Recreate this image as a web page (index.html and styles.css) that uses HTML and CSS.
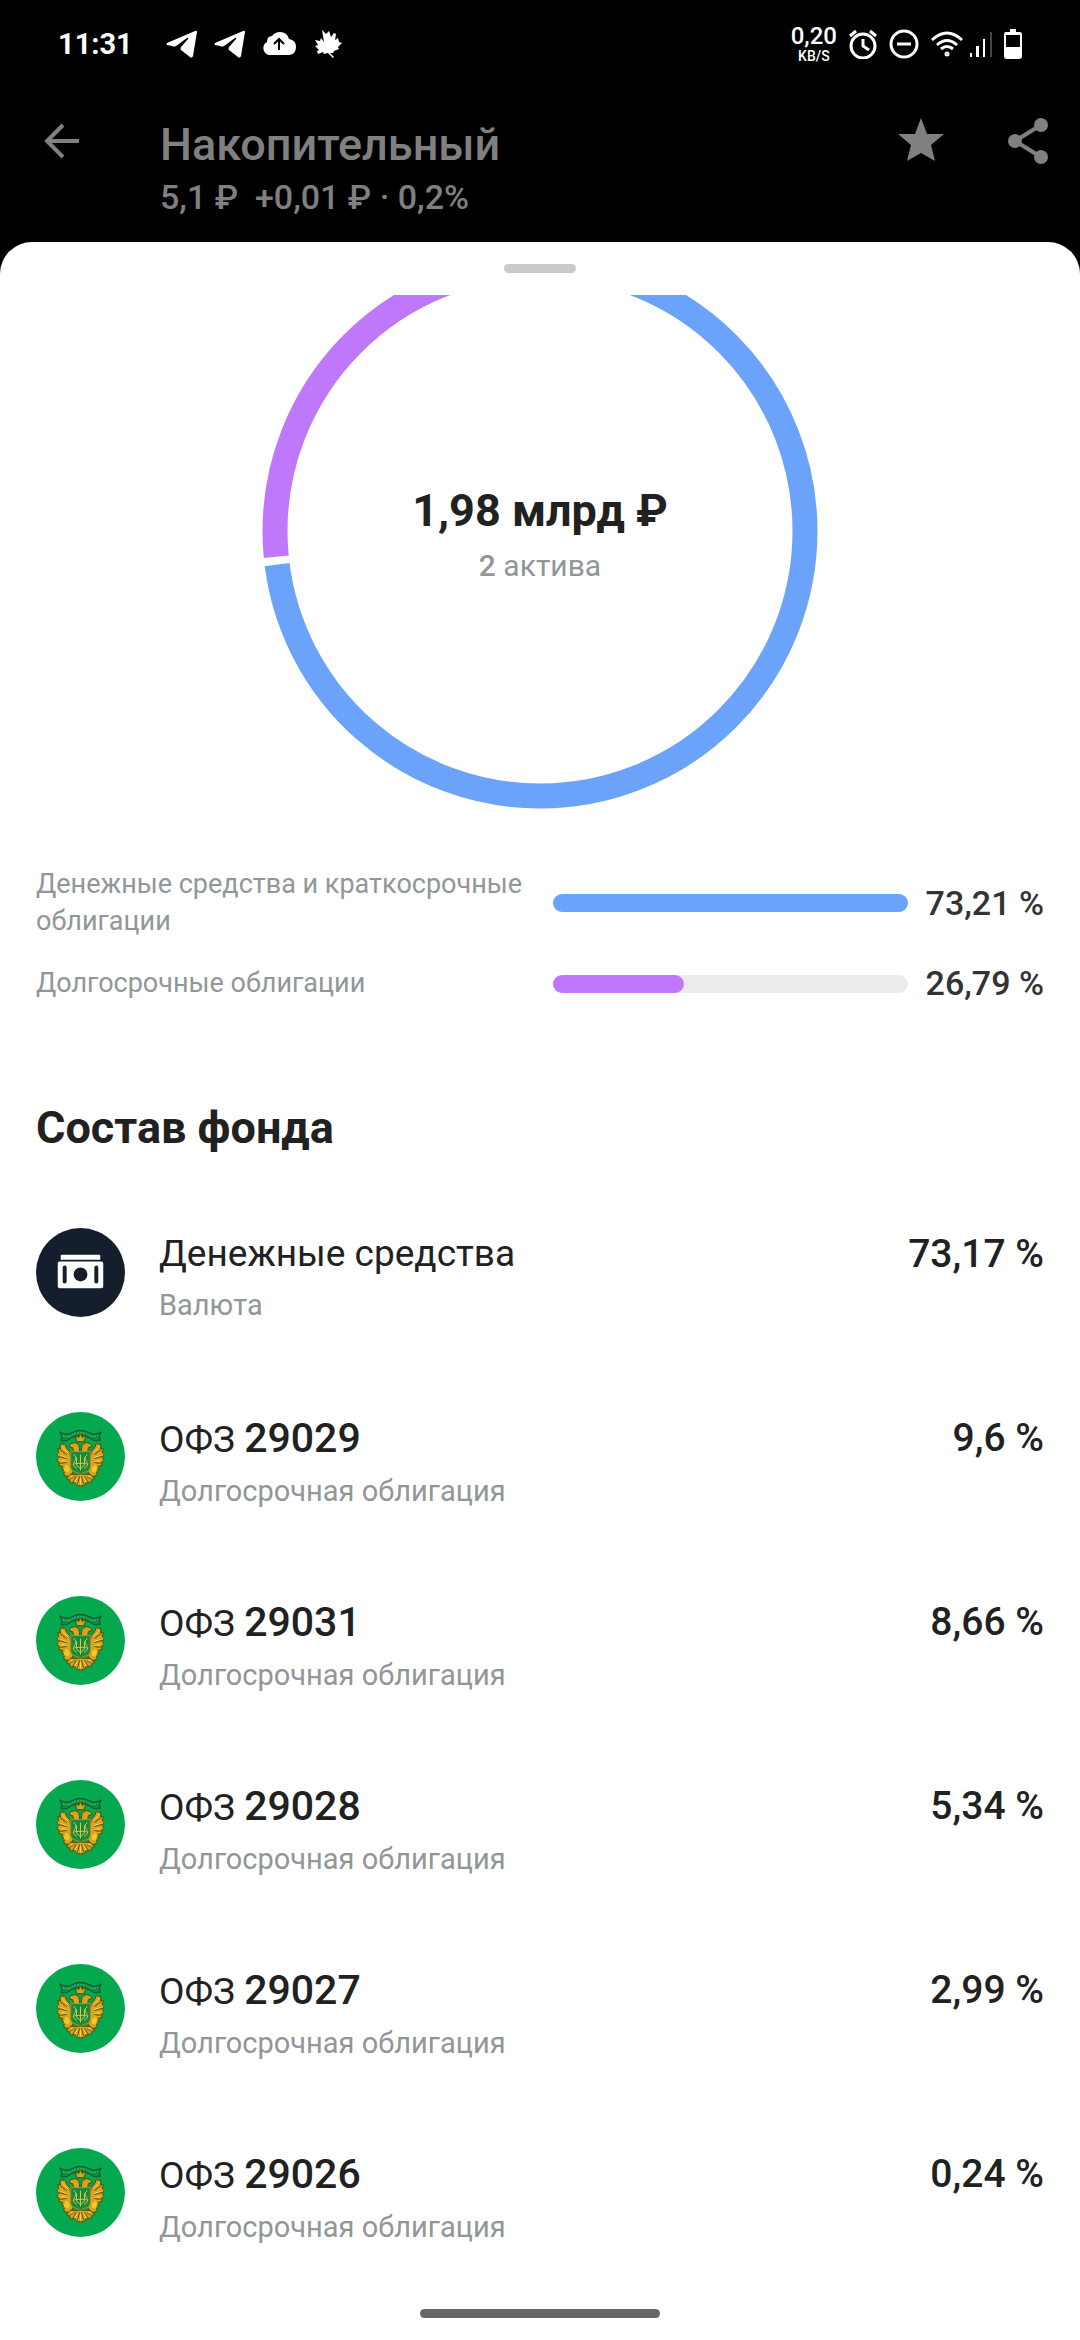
FILE: index.html
```html
<!DOCTYPE html>
<html lang="ru">
<head>
  <meta charset="utf-8">
  <meta name="viewport" content="width=device-width, initial-scale=1">
  <title>Накопительный</title>
  <link rel="stylesheet" href="styles.css">
</head>
<body>
  <!-- shared icons -->
  <svg class="sprite" aria-hidden="true">
    <symbol id="telegram" viewBox="0 0 32 28">
      <path d="M1 13 29 1q2-1 2 1l-4 24q-1 3-3 1l-9-7q-1-1 0-3l7-8q1-2-1-1L10 16q-2 1-4 0l-5-1q-1-1 0-2z"/>
    </symbol>
    <symbol id="eagle" viewBox="0 0 90 90">
      <circle cx="45" cy="45" r="45" fill="#04a84f"/>
      <!-- ribbon -->
      <path d="M24 20q6 4 12 1 9-5 18 0 6 3 12-1l-2 5 1 4q-7 1-11-3-9-4-18 0-4 4-11 3l1-4z" fill="#0b8a42" stroke="#07502c" stroke-width="1"/>
      <path d="M27 24q6 2 10-1 8-4 16 0 4 3 10 1" fill="none" stroke="#4ec878" stroke-width="1" stroke-dasharray="2 1"/>
      <!-- wings, heads, crown and tail -->
      <g fill="#d9a41a" stroke="#4a4a12" stroke-width="1">
        <path d="M34 40q-3-2-5-8l-5 1 1 4-3 0 1 4-2 2 2 3-2 3 3 2-1 3 4 1-1 3 3 1-1 5 7 2 3-7z"/>
        <path d="M56 40q3-2 5-8l5 1-1 4 3 0-1 4 2 2-2 3 2 3-3 2 1 3-4 1 1 3-3 1 1 5-7 2-3-7z"/>
        <path d="M44 40q1-8-5-9-4 0-6 4l4 1 1 5zM46 40q-1-8 5-9 4 0 6 4l-4 1-1 5z"/>
        <path d="m40 23 3 3 2-4 2 4 3-3-1 7h-8z"/>
        <path d="M35 63h20l4 4-3 2-1 3-4-1-2 3-4 1-4-1-2-3-4 1-1-3-3-2z"/>
      </g>
      <path d="m24 38 7 5m-8 2 8 2m-6 5 6-1m35-13-7 5m8 2-8 2m6 5-6-1M34 68l5-3m-2 6 4-6m1 8 2-8m4 8-2-8m7 6-4-6m7 3-5-3" stroke="#54500f" stroke-width="1" fill="none"/>
      <path d="m26 35 6 6m-7 3 6 2m-6 3 6 1m33-15-6 6m7 3-6 2m6 3-6 1M35 66l3-1m1 6 3-5m3 7v-7m6 5-3-5m7 0-3-1" stroke="#ffd84a" stroke-width="1" fill="none"/>
      <!-- shield with monogram -->
      <path d="M35 40h20v15q0 5-6 6l-4 2-4-2q-6-1-6-6z" fill="#168a40" stroke="#b8911b" stroke-width="1"/>
      <path d="M38 43q4 3 1 7t2 7m11-14q-4 3-1 7t-2 7M45 43v16m-4-13v8l4 3 4-3v-8m-10 6h12" fill="none" stroke="#e8c32c" stroke-width="1"/>
      <path d="m30 53 4 3-1 5-5-1zm30 0-4 3 1 5 5-1z" fill="#f4c72c"/>
    </symbol>
  </svg>

  <div class="status-bar">
    <span class="clock">11:31</span>
    <div class="notifications">
      <svg width="32" height="28"><use href="#telegram"/></svg>
      <svg width="32" height="28"><use href="#telegram"/></svg>
      <svg width="34" height="24" viewBox="0 0 34 24">
        <path d="M7 23a7 7 0 0 1-2-13Q5 4 10 4q3-4 8-4 7 0 9 7 7 1 7 8 0 7-7 8z"/>
        <path d="M17 18V8m-5 4 5-5 5 5" fill="none" stroke="#000" stroke-width="2"/>
      </svg>
      <svg class="leaf" width="28" height="28" viewBox="0 0 28 28">
        <path d="m8 0 4 4 3-3 2 6 3-4 2 1-1 6 3-2 1 4 3 1-4 4 1 2-5 2-1 2-3 0 4 4-1 1-5-5-4 1-1-2-5 2-1-3 2-1-4-4 3-1-3-5 5 1 1-3 3 4z"/>
      </svg>
    </div>
    <div class="indicators">
      <div class="speed"><span class="speed-value">0,20</span><span class="speed-unit">KB/S</span></div>
      <svg width="28" height="30" viewBox="0 0 28 30" class="line">
        <circle cx="14" cy="17" r="12"/>
        <path d="M14 10v7l6 4M1 7l6-5m20 5-6-5"/>
      </svg>
      <svg width="30" height="30" viewBox="0 0 30 30" class="line">
        <circle cx="15" cy="15" r="13"/>
        <path d="M8 15h14"/>
      </svg>
      <div class="network">
        <svg width="32" height="26" viewBox="0 0 32 26" class="line">
          <path d="M1 9Q16-5 31 9M6 14q10-9 20 0M10 18q6-5 12 0"/>
          <circle cx="16" cy="23" r="1"/>
        </svg>
        <svg width="22" height="26" viewBox="0 0 22 26">
          <path d="M0 22h2v4H0zM6 15h3v11H6zM13 8h2v18h-2z"/>
          <path d="M20 1h2v25h-2z" fill="#444"/>
        </svg>
      </div>
      <svg width="18" height="30" viewBox="0 0 18 30">
        <path d="M6 0h6v3h4q2 0 2 2v22q0 3-3 3H3q-3 0-3-3V5q0-2 2-2h4z"/>
        <path d="M2 6h14v12H2z" fill="#000"/>
      </svg>
    </div>
  </div>

  <header class="header">
    <button type="button" class="icon-button back" aria-label="Назад">
      <svg width="36" height="36" viewBox="0 0 36 36"><path d="M35 18H4M19 2 3 18l16 16" fill="none" stroke="#808080" stroke-width="4"/></svg>
    </button>
    <div class="fund">
      <h1 class="fund-name">Накопительный</h1>
      <p class="fund-price">5,1 ₽&nbsp; +0,01 ₽ · 0,2%</p>
    </div>
    <button type="button" class="icon-button" aria-label="В избранное">
      <svg width="46" height="44" viewBox="0 0 46 44"><path d="m23 0 6 16h17L33 27l4 16-14-8-14 8 4-16L0 16h17z"/></svg>
    </button>
    <button type="button" class="icon-button" aria-label="Поделиться">
      <svg width="40" height="46" viewBox="0 0 40 46">
        <path d="M33 7 7 23l26 16" fill="none" stroke="#808080" stroke-width="4"/>
        <circle cx="33" cy="7" r="7"/><circle cx="7" cy="23" r="7"/><circle cx="33" cy="39" r="7"/>
      </svg>
    </button>
  </header>

  <main class="sheet">
    <div class="handle"></div>

    <div class="donut">
      <!-- top part of the ring is scrolled under the handle -->
      <svg width="556" height="514" viewBox="0 42 556 514" fill="none" stroke-width="25">
        <circle cx="278" cy="278" r="265" pathLength="10000" stroke="#6ba3fb" stroke-dasharray="7273 2727" stroke-dashoffset="-24" transform="rotate(-90 278 278)"/>
        <circle cx="278" cy="278" r="265" pathLength="10000" stroke="#c078fa" stroke-dasharray="2631 7369" stroke-dashoffset="-7345" transform="rotate(-90 278 278)"/>
      </svg>
      <div class="donut-text">
        <div class="total">1,98 млрд ₽</div>
        <div class="assets"><b>2</b> актива</div>
      </div>
    </div>

    <ul class="legend">
      <li class="legend-row">
        <span class="legend-name">Денежные средства и краткосрочные облигации</span>
        <span class="bar"><span class="bar-fill blue" style="width: 100%"></span></span>
        <span class="legend-value">73,21 %</span>
      </li>
      <li class="legend-row">
        <span class="legend-name">Долгосрочные облигации</span>
        <span class="bar"><span class="bar-fill purple" style="width: 37%"></span></span>
        <span class="legend-value">26,79 %</span>
      </li>
    </ul>

    <h2 class="section-title">Состав фонда</h2>

    <ul class="holdings">
      <li class="holding">
        <svg class="holding-icon" viewBox="0 0 90 90">
          <circle cx="45" cy="45" r="45" fill="#151e2d"/>
          <path d="M26 27h38q1 0 1 1v4H25v-4q0-1 1-1zM24 34h42q2 0 2 2v23q0 2-2 2H24q-2 0-2-2V36q0-2 2-2z" fill="#fff"/>
          <path d="M29 40v14m32-14v14" stroke="#151e2d" stroke-width="4" stroke-linecap="round"/>
          <circle cx="45" cy="47" r="7" fill="#151e2d"/>
        </svg>
        <div class="holding-text">
          <div class="holding-name">Денежные средства</div>
          <div class="holding-type">Валюта</div>
        </div>
        <div class="holding-share">73,17 %</div>
      </li>
      <li class="holding">
        <svg class="holding-icon"><use href="#eagle"/></svg>
        <div class="holding-text">
          <div class="holding-name">ОФЗ <b>29029</b></div>
          <div class="holding-type">Долгосрочная облигация</div>
        </div>
        <div class="holding-share">9,6 %</div>
      </li>
      <li class="holding">
        <svg class="holding-icon"><use href="#eagle"/></svg>
        <div class="holding-text">
          <div class="holding-name">ОФЗ <b>29031</b></div>
          <div class="holding-type">Долгосрочная облигация</div>
        </div>
        <div class="holding-share">8,66 %</div>
      </li>
      <li class="holding">
        <svg class="holding-icon"><use href="#eagle"/></svg>
        <div class="holding-text">
          <div class="holding-name">ОФЗ <b>29028</b></div>
          <div class="holding-type">Долгосрочная облигация</div>
        </div>
        <div class="holding-share">5,34 %</div>
      </li>
      <li class="holding">
        <svg class="holding-icon"><use href="#eagle"/></svg>
        <div class="holding-text">
          <div class="holding-name">ОФЗ <b>29027</b></div>
          <div class="holding-type">Долгосрочная облигация</div>
        </div>
        <div class="holding-share">2,99 %</div>
      </li>
      <li class="holding">
        <svg class="holding-icon"><use href="#eagle"/></svg>
        <div class="holding-text">
          <div class="holding-name">ОФЗ <b>29026</b></div>
          <div class="holding-type">Долгосрочная облигация</div>
        </div>
        <div class="holding-share">0,24 %</div>
      </li>
    </ul>
  </main>

  <div class="home-indicator"></div>
</body>
</html>
```
FILE: styles.css
```css
* {
  box-sizing: border-box;
}

body {
  margin: 0;
  min-height: 100vh;
  display: flex;
  flex-direction: column;
  background: #000;
  color: #212121;
  font-family: Roboto, "Noto Sans", sans-serif;
}

h1, h2, p, ul {
  margin: 0;
  padding: 0;
}

ul {
  list-style: none;
}

svg {
  display: block;
  flex: none;
}

.sprite {
  position: absolute;
  width: 0;
  height: 0;
}

/* status bar */

.status-bar {
  display: flex;
  align-items: center;
  height: 88px;
  padding: 0 58px;
  color: #fff;
  fill: #fff;
}

.clock {
  flex: 0 0 108px;
  font-size: 29px;
  font-weight: 700;
}

.notifications {
  display: flex;
  align-items: center;
  gap: 16px;
}

.leaf {
  margin-left: 2px;
}

.indicators {
  display: flex;
  align-items: center;
  gap: 12px;
  margin-left: auto;
}

.network {
  display: flex;
  gap: 7px;
}

.speed {
  display: flex;
  flex-direction: column;
  align-items: center;
  font-weight: 500;
}

.speed-value {
  font-size: 24px;
  line-height: 24px;
}

.speed-unit {
  font-size: 14px;
  line-height: 16px;
}

.line {
  fill: none;
  stroke: #fff;
  stroke-width: 3;
}

/* header */

.header {
  display: flex;
  align-items: flex-start;
  height: 154px;
  padding: 30px 32px 0 44px;
}

.icon-button {
  display: flex;
  padding: 0;
  margin-left: 64px;
  border: 0;
  background: none;
  fill: #808080;
}

.back {
  margin: 5px 80px 0 0;
}

.fund {
  flex: 1;
  color: #808080;
}

.fund-name {
  font-size: 45px;
  line-height: 54px;
  font-weight: 500;
}

.fund-price {
  font-size: 34px;
  line-height: 50px;
  font-weight: 500;
}

/* sheet */

.sheet {
  flex: 1;
  padding: 22px 36px 0;
  border-radius: 32px 32px 0 0;
  background: #fff;
}

.handle {
  width: 72px;
  height: 9px;
  margin: 0 auto 22px;
  border-radius: 5px;
  background: #c8cacd;
}

.donut {
  display: grid;
  justify-items: center;
}

.donut > * {
  grid-area: 1 / 1;
}

.donut-text {
  padding-top: 188px;
  text-align: center;
}

.total {
  font-size: 45px;
  line-height: 56px;
  font-weight: 700;
}

.assets {
  font-size: 30px;
  line-height: 54px;
  color: #919699;
}

.assets b {
  font-weight: 500;
}

.legend {
  display: flex;
  flex-direction: column;
  gap: 25px;
  margin-top: 57px;
}

.legend-row {
  display: flex;
  align-items: center;
}

.legend-name {
  flex: 0 0 49%;
  margin-right: 23px;
  font-size: 27px;
  line-height: 37px;
  color: #919699;
}

.bar {
  flex: 1;
  height: 18px;
  border-radius: 9px;
  background: #ebecec;
}

.bar-fill {
  display: block;
  height: 18px;
  border-radius: 9px;
}

.blue {
  background: #6ba3fb;
}

.purple {
  background: #c078fa;
}

.legend-value {
  margin-left: 18px;
  font-size: 34px;
  line-height: 37px;
  font-weight: 500;
  color: #333;
}

.section-title {
  margin-top: 100px;
  font-size: 45px;
  line-height: 52px;
  font-weight: 700;
}

.holdings {
  margin-top: 74px;
}

.holding {
  display: flex;
  height: 184px;
}

.holding-icon {
  width: 89px;
  height: 89px;
}

.holding-text {
  flex: 1;
  padding: 4px 0 0 34px;
}

.holding-name {
  font-size: 37px;
  line-height: 44px;
}

.holding-name b {
  font-size: 41px;
  font-weight: 500;
}

.holding-type {
  font-size: 29px;
  line-height: 58px;
  color: #919699;
}

.holding-share {
  padding-top: 4px;
  font-size: 39px;
  line-height: 44px;
  font-weight: 500;
}

.home-indicator {
  position: fixed;
  bottom: 22px;
  left: 50%;
  width: 240px;
  height: 9px;
  margin-left: -120px;
  border-radius: 5px;
  background: #666;
}
```
